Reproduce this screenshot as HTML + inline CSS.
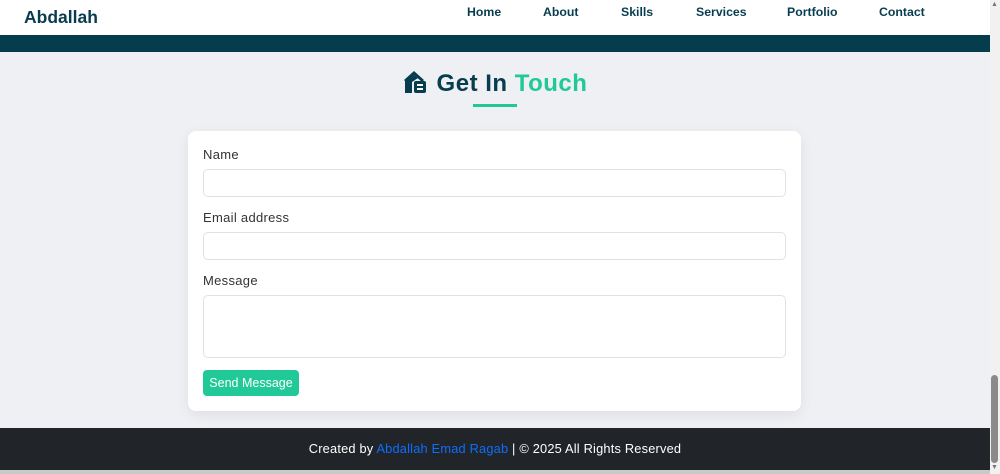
<!DOCTYPE html>
<html><head><meta charset="utf-8"><style>
*{box-sizing:border-box;margin:0;padding:0}
body{width:1000px;height:474px;overflow:hidden;background:#eef0f3;font-family:"Liberation Sans",Arial,sans-serif;position:relative}
.page{position:absolute;left:0;top:0;width:990px;height:474px}
.hdr{height:35px;background:#fff;position:relative}
.logo{position:absolute;left:24px;top:7px;font-size:17.5px;font-weight:bold;color:#083d4f}
.nav a{position:absolute;top:5px;font-size:12.3px;font-weight:bold;color:#083d4f;text-decoration:none}
.bar{height:17px;background:#053d4d}
h2{position:absolute;top:70px;left:0;width:990px;text-align:center;font-size:24px;font-weight:bold;color:#083d4f;letter-spacing:.5px}
h2 span{color:#20c997}
h2 svg{vertical-align:-3px;margin-right:8px}
.ul{position:absolute;left:473px;top:104px;width:44px;height:3px;background:#20c997}
.card{position:absolute;left:188px;top:131px;width:613px;height:280px;background:#fff;border-radius:8px;box-shadow:0 4px 14px rgba(0,0,0,.07)}
label{position:absolute;left:15px;font-size:13px;color:#333;letter-spacing:.3px}
.in{position:absolute;left:15px;width:583px;border:1px solid #dee2e6;border-radius:5px;background:#fff}
.btn{position:absolute;left:15px;top:239px;width:96px;height:26px;background:#20c997;border-radius:4px;color:#fff;font-size:12.5px;text-align:center;line-height:26px}
.ft{position:absolute;top:428px;left:0;width:990px;height:42px;background:#212529;color:#fff;font-size:12.8px;text-align:center;line-height:42px;letter-spacing:.2px}
.ft span{color:#0d6efd}
.sb{position:absolute;left:990px;top:0;width:10px;height:474px;background:#f1f1f1}
.th{position:absolute;left:991px;top:375px;width:7px;height:88px;background:#8a8a8a;border-radius:4px}
.bot{position:absolute;top:470px;left:0;width:990px;height:4px;background:#c9c9c9}
</style></head><body>
<div class="page">
<div class="hdr"><div class="logo">Abdallah</div>
<div class="nav"><a style="left:467px">Home</a><a style="left:543px">About</a><a style="left:621px">Skills</a><a style="left:696px">Services</a><a style="left:787px">Portfolio</a><a style="left:879px">Contact</a></div></div>
<div class="bar"></div>
<h2><svg width="26" height="24" viewBox="0 0 26 24"><path d="M1 10 L11 1 L21 10 L19 12 L11 5 L3 12 Z" fill="#083d4f"/><path d="M2 11 L2 23 L9 23 L9 12 L15 8 L11 5Z" fill="#083d4f"/><rect x="11" y="11" width="12" height="12" rx="2" fill="#083d4f"/><rect x="14" y="14" width="6" height="2" fill="#fff"/><rect x="14" y="18" width="6" height="2" fill="#fff"/></svg>Get In <span>Touch</span></h2>
<div class="ul"></div>
<div class="card">
<label style="top:16px">Name</label><div class="in" style="top:38px;height:28px"></div>
<label style="top:79px">Email address</label><div class="in" style="top:101px;height:28px"></div>
<label style="top:142px">Message</label><div class="in" style="top:164px;height:63px"></div>
<div class="btn">Send Message</div>
</div>
<div class="ft">Created by <span>Abdallah Emad Ragab</span> | © 2025 All Rights Reserved</div>
<div class="bot"></div>
</div>
<div class="sb"></div><div class="th"></div>
<div style="position:absolute;left:991px;top:1px;font-size:7px;color:#777">▲</div>
<div style="position:absolute;left:991px;top:464px;font-size:7px;color:#777">▼</div>
</body></html>
